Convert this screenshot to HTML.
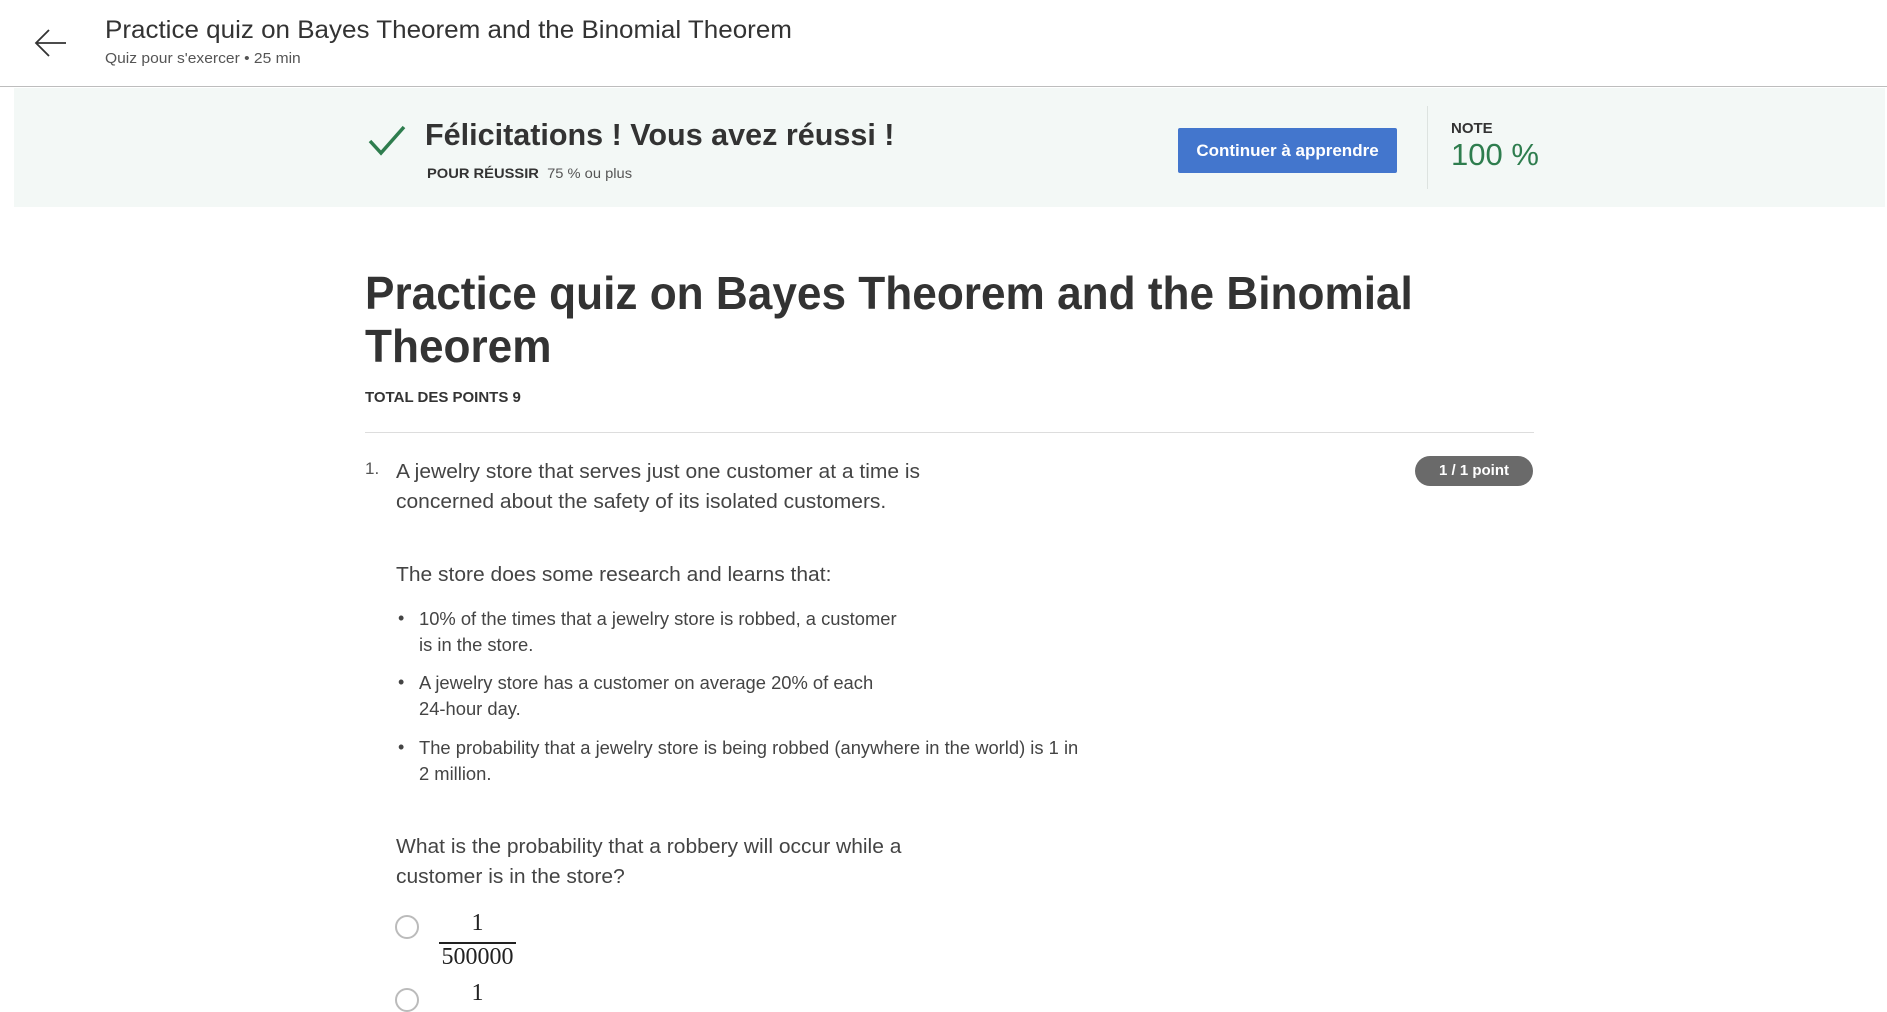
<!DOCTYPE html>
<html><head><meta charset="utf-8"><style>
*{margin:0;padding:0;box-sizing:border-box}
body{width:1887px;height:994px;overflow:hidden;background:#fff;font-family:"Liberation Sans",Arial,sans-serif;color:#333;position:relative}
.a{position:absolute;white-space:nowrap}
.n{transform-origin:0 0}
</style></head><body>
<div class="a" style="left:0;top:0;width:1887px;height:87px;border-bottom:1px solid #bdbdbd"></div>
<svg class="a" style="left:34px;top:28px" width="34" height="30" viewBox="0 0 34 30"><path d="M32 15H3M15 2L2 15l13 13" fill="none" stroke="#333" stroke-width="1.8"/></svg>
<div class="a n" style="left:105px;top:16px;font-size:25px;color:#333;transform:scaleX(1.04)">Practice quiz on Bayes Theorem and the Binomial Theorem</div>
<div class="a n" style="left:105px;top:50px;font-size:15px;color:#555;transform:scaleX(1.04)">Quiz pour s'exercer • 25 min</div>

<div class="a" style="left:14px;top:88px;width:1871px;height:119px;background:#f3f8f6"></div>
<svg class="a" style="left:368px;top:124px" width="38" height="32" viewBox="0 0 38 32"><path d="M2 17l11 12L36 3" fill="none" stroke="#2e7d4e" stroke-width="3.5"/></svg>
<div class="a n" style="left:425px;top:117px;font-size:31px;font-weight:bold;color:#333;transform:scaleX(0.985)">Félicitations ! Vous avez réussi !</div>
<div class="a n" style="left:427px;top:165px;font-size:14px;color:#555;transform:scaleX(1.05)"><b style="color:#333">POUR RÉUSSIR</b>&nbsp; 75 % ou plus</div>
<div class="a" style="left:1178px;top:128px;width:219px;height:45px;background:#4376cd;border-radius:2px;color:#fff;font-weight:bold;font-size:17px;text-align:center;line-height:45px">Continuer à apprendre</div>
<div class="a" style="left:1427px;top:106px;width:1px;height:83px;background:#dde3e0"></div>
<div class="a" style="left:1451px;top:120px;font-size:15px;font-weight:bold;color:#333">NOTE</div>
<div class="a" style="left:1451px;top:137px;font-size:31px;color:#2e7d4e">100 %</div>

<div class="a n" style="left:365px;top:267px;font-size:46px;font-weight:bold;color:#333;line-height:53px;transform:scaleX(0.96)">Practice quiz on Bayes Theorem and the Binomial<br>Theorem</div>
<div class="a n" style="left:365px;top:389px;font-size:15px;font-weight:bold;color:#333;transform:scaleX(1.0)">TOTAL DES POINTS 9</div>
<div class="a" style="left:365px;top:432px;width:1169px;height:1px;background:#ddd"></div>

<div class="a" style="left:365px;top:459px;font-size:17px;color:#555">1.</div>
<div class="a n" style="left:396px;top:457px;font-size:20px;line-height:30px;color:#444;transform:scaleX(1.05)">A jewelry store that serves just one customer at a time is<br>concerned about the safety of its isolated customers.</div>
<div class="a" style="left:1415px;top:456px;width:118px;height:30px;border-radius:15px;background:#6a6a6a;color:#fff;font-weight:bold;font-size:15px;text-align:center;line-height:30px">1 / 1 point</div>
<div class="a n" style="left:396px;top:564px;font-size:20px;color:#444;transform:scaleX(1.05)">The store does some research and learns that:</div>
<div class="a" style="left:398px;top:605px;font-size:18px;line-height:26px;color:#444">•</div>
<div class="a n" style="left:419px;top:606px;font-size:18px;line-height:26px;color:#444;transform:scaleX(1.02)">10% of the times that a jewelry store is robbed, a customer<br>is in the store.</div>
<div class="a" style="left:398px;top:669px;font-size:18px;line-height:26px;color:#444">•</div>
<div class="a n" style="left:419px;top:670px;font-size:18px;line-height:26px;color:#444;transform:scaleX(1.02)">A jewelry store has a customer on average 20% of each<br>24-hour day.</div>
<div class="a" style="left:398px;top:734px;font-size:18px;line-height:26px;color:#444">•</div>
<div class="a n" style="left:419px;top:735px;font-size:18px;line-height:26px;color:#444;transform:scaleX(1.02)">The probability that a jewelry store is being robbed (anywhere in the world) is 1 in<br>2 million.</div>
<div class="a n" style="left:396px;top:832px;font-size:20px;line-height:30px;color:#444;transform:scaleX(1.05)">What is the probability that a robbery will occur while a<br>customer is in the store?</div>
<div class="a" style="left:395px;top:915px;width:24px;height:24px;border:2px solid #bbb;border-radius:50%"></div>
<div class="a" style="left:439px;top:910px;width:77px;text-align:center;font-family:'Liberation Serif',serif;font-size:24px;color:#222">1</div>
<div class="a" style="left:439px;top:942px;width:77px;height:2px;background:#222"></div>
<div class="a" style="left:439px;top:944px;width:77px;text-align:center;font-family:'Liberation Serif',serif;font-size:24px;color:#222">500000</div>
<div class="a" style="left:395px;top:988px;width:24px;height:24px;border:2px solid #bbb;border-radius:50%"></div>
<div class="a" style="left:439px;top:980px;width:77px;text-align:center;font-family:'Liberation Serif',serif;font-size:24px;color:#222">1</div>
</body></html>
